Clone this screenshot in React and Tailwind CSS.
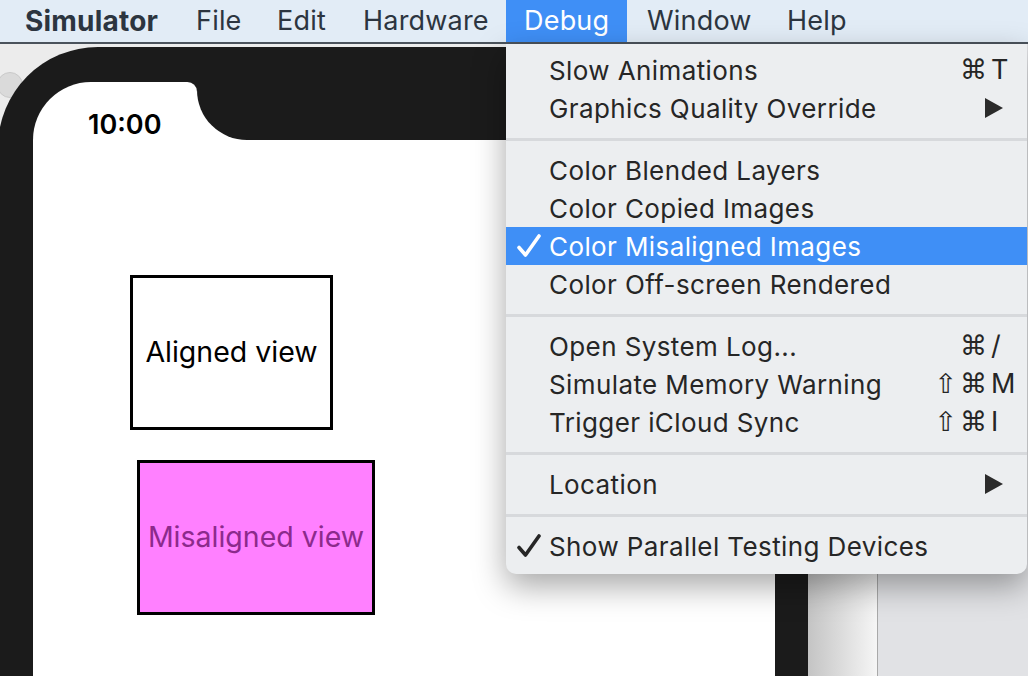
import React from 'react';

const sans = { fontFamily: 'Inter, "Noto Sans", "DejaVu Sans", sans-serif' };
const symbols = { fontFamily: '"DejaVu Sans", sans-serif' };

function Triangle() {
    return (
        <svg width="18" height="20" viewBox="0 0 18 20">
            <polygon points="0,0 18,10 0,20" fill="#2b2b2b" />
        </svg>
    );
}

function Check({ color }) {
    return (
        <svg width="24" height="24" viewBox="0 0 24 24">
            <path d="M2 13.5 L8.5 21 L22 2" fill="none" stroke={color} strokeWidth="3.6" strokeLinecap="round" strokeLinejoin="round" />
        </svg>
    );
}

function Item({ label, mods, keyChar, arrow, checked, active }) {
    return (
        <div className={'flex items-center h-[38px] text-[26px] tracking-[0.4px] ' + (active ? 'bg-[#3f8ff6] text-white' : 'text-[#262626]')}>
            <div className="w-[43px] shrink-0 pl-[11px] flex items-center">{checked ? <Check color={active ? '#ffffff' : '#262626'} /> : null}</div>
            <div className="flex-1 whitespace-nowrap">{label}</div>
            {arrow ? (
                <div className="w-[97px] shrink-0 flex justify-end pr-[24px]">
                    <Triangle />
                </div>
            ) : (
                <div className="flex items-center shrink-0">
                    <span className="w-[73px] text-right text-[27px] tracking-[3px]" style={symbols}>{mods}</span>
                    <span className="w-[37px] pl-[1px] text-[27px]">{keyChar}</span>
                </div>
            )}
        </div>
    );
}

function Separator() {
    return (
        <div className="h-[24px] flex items-center">
            <div className="h-[3px] w-full bg-[#d7d9dc]" />
        </div>
    );
}

export default function App() {
    return (
        <div className="relative w-[1028px] h-[676px] overflow-hidden bg-[#ececec]" style={sans}>
            {/* menu bar */}
            <div className="h-[44px] flex items-center bg-[#e2ecf6] border-b-2 border-[#4b535c] text-[27px] text-[#2c3540] tracking-[0.2px]">
                <div className="w-[196px] pl-[25px] text-[28px] font-bold">Simulator</div>
                <div className="w-[81px]">File</div>
                <div className="w-[86px]">Edit</div>
                <div className="w-[143px]">Hardware</div>
                <div className="w-[121px] h-full flex items-center bg-[#3f8ff6] text-white pl-[18px]">Debug</div>
                <div className="w-[160px] pl-[20px]">Window</div>
                <div>Help</div>
            </div>

            {/* window content */}
            <div className="flex h-[632px]">
                <div className="relative w-[808px] pt-[3px]">
                    <div className="absolute left-[-3px] top-[28px] w-[26px] h-[26px] rounded-full bg-[#dadada] border border-[#c9c9c9]" />
                    <div className="relative ml-[-2px] h-[700px] rounded-tl-[100px] bg-[#1b1b1b] pl-[35px] pr-[33px] pt-[35px]">
                        <div className="flex h-[58px] bg-[#1b1b1b]">
                            <div className="w-[164px] bg-white rounded-tl-[60px] rounded-tr-[10px] flex items-end pl-[55px]">
                                <span className="text-[27px] leading-[30px] font-semibold text-black">10:00</span>
                            </div>
                            <div className="flex-1 bg-white">
                                <div className="h-full bg-[#1b1b1b] rounded-bl-[50px]" />
                            </div>
                        </div>
                        <div className="h-[600px] bg-white pt-[135px] pl-[97px]">
                            <div className="w-[203px] h-[155px] border-[3px] border-black flex items-center justify-center text-[28.5px] text-black">
                                Aligned view
                            </div>
                            <div className="mt-[30px] ml-[7px] w-[238px] h-[155px] border-[3px] border-black bg-[#ff80ff] flex items-center justify-center text-[28.5px] text-[#8c2a8c]">
                                Misaligned view
                            </div>
                        </div>
                    </div>
                </div>
                <div className="w-[69px] bg-gradient-to-r from-[#c4c4c4] to-[#f6f6f6]" />
                <div className="w-[1px] bg-[#a9a9a9]" />
                <div className="flex-1 bg-[#e1e2e5]" />
            </div>

            {/* Debug menu */}
            <div className="absolute left-[506px] top-[44px] w-[521px] pt-[7px] pb-[9px] rounded-b-[10px] bg-[#eceef0] shadow-[0_12px_32px_rgba(0,0,0,0.35)]">
                <Item label="Slow Animations" mods="⌘" keyChar="T" />
                <Item label="Graphics Quality Override" arrow />
                <Separator />
                <Item label="Color Blended Layers" />
                <Item label="Color Copied Images" />
                <Item label="Color Misaligned Images" checked active />
                <Item label="Color Off-screen Rendered" />
                <Separator />
                <Item label="Open System Log..." mods="⌘" keyChar="/" />
                <Item label="Simulate Memory Warning" mods="⇧⌘" keyChar="M" />
                <Item label="Trigger iCloud Sync" mods="⇧⌘" keyChar="I" />
                <Separator />
                <Item label="Location" arrow />
                <Separator />
                <Item label="Show Parallel Testing Devices" checked />
            </div>
        </div>
    );
}
